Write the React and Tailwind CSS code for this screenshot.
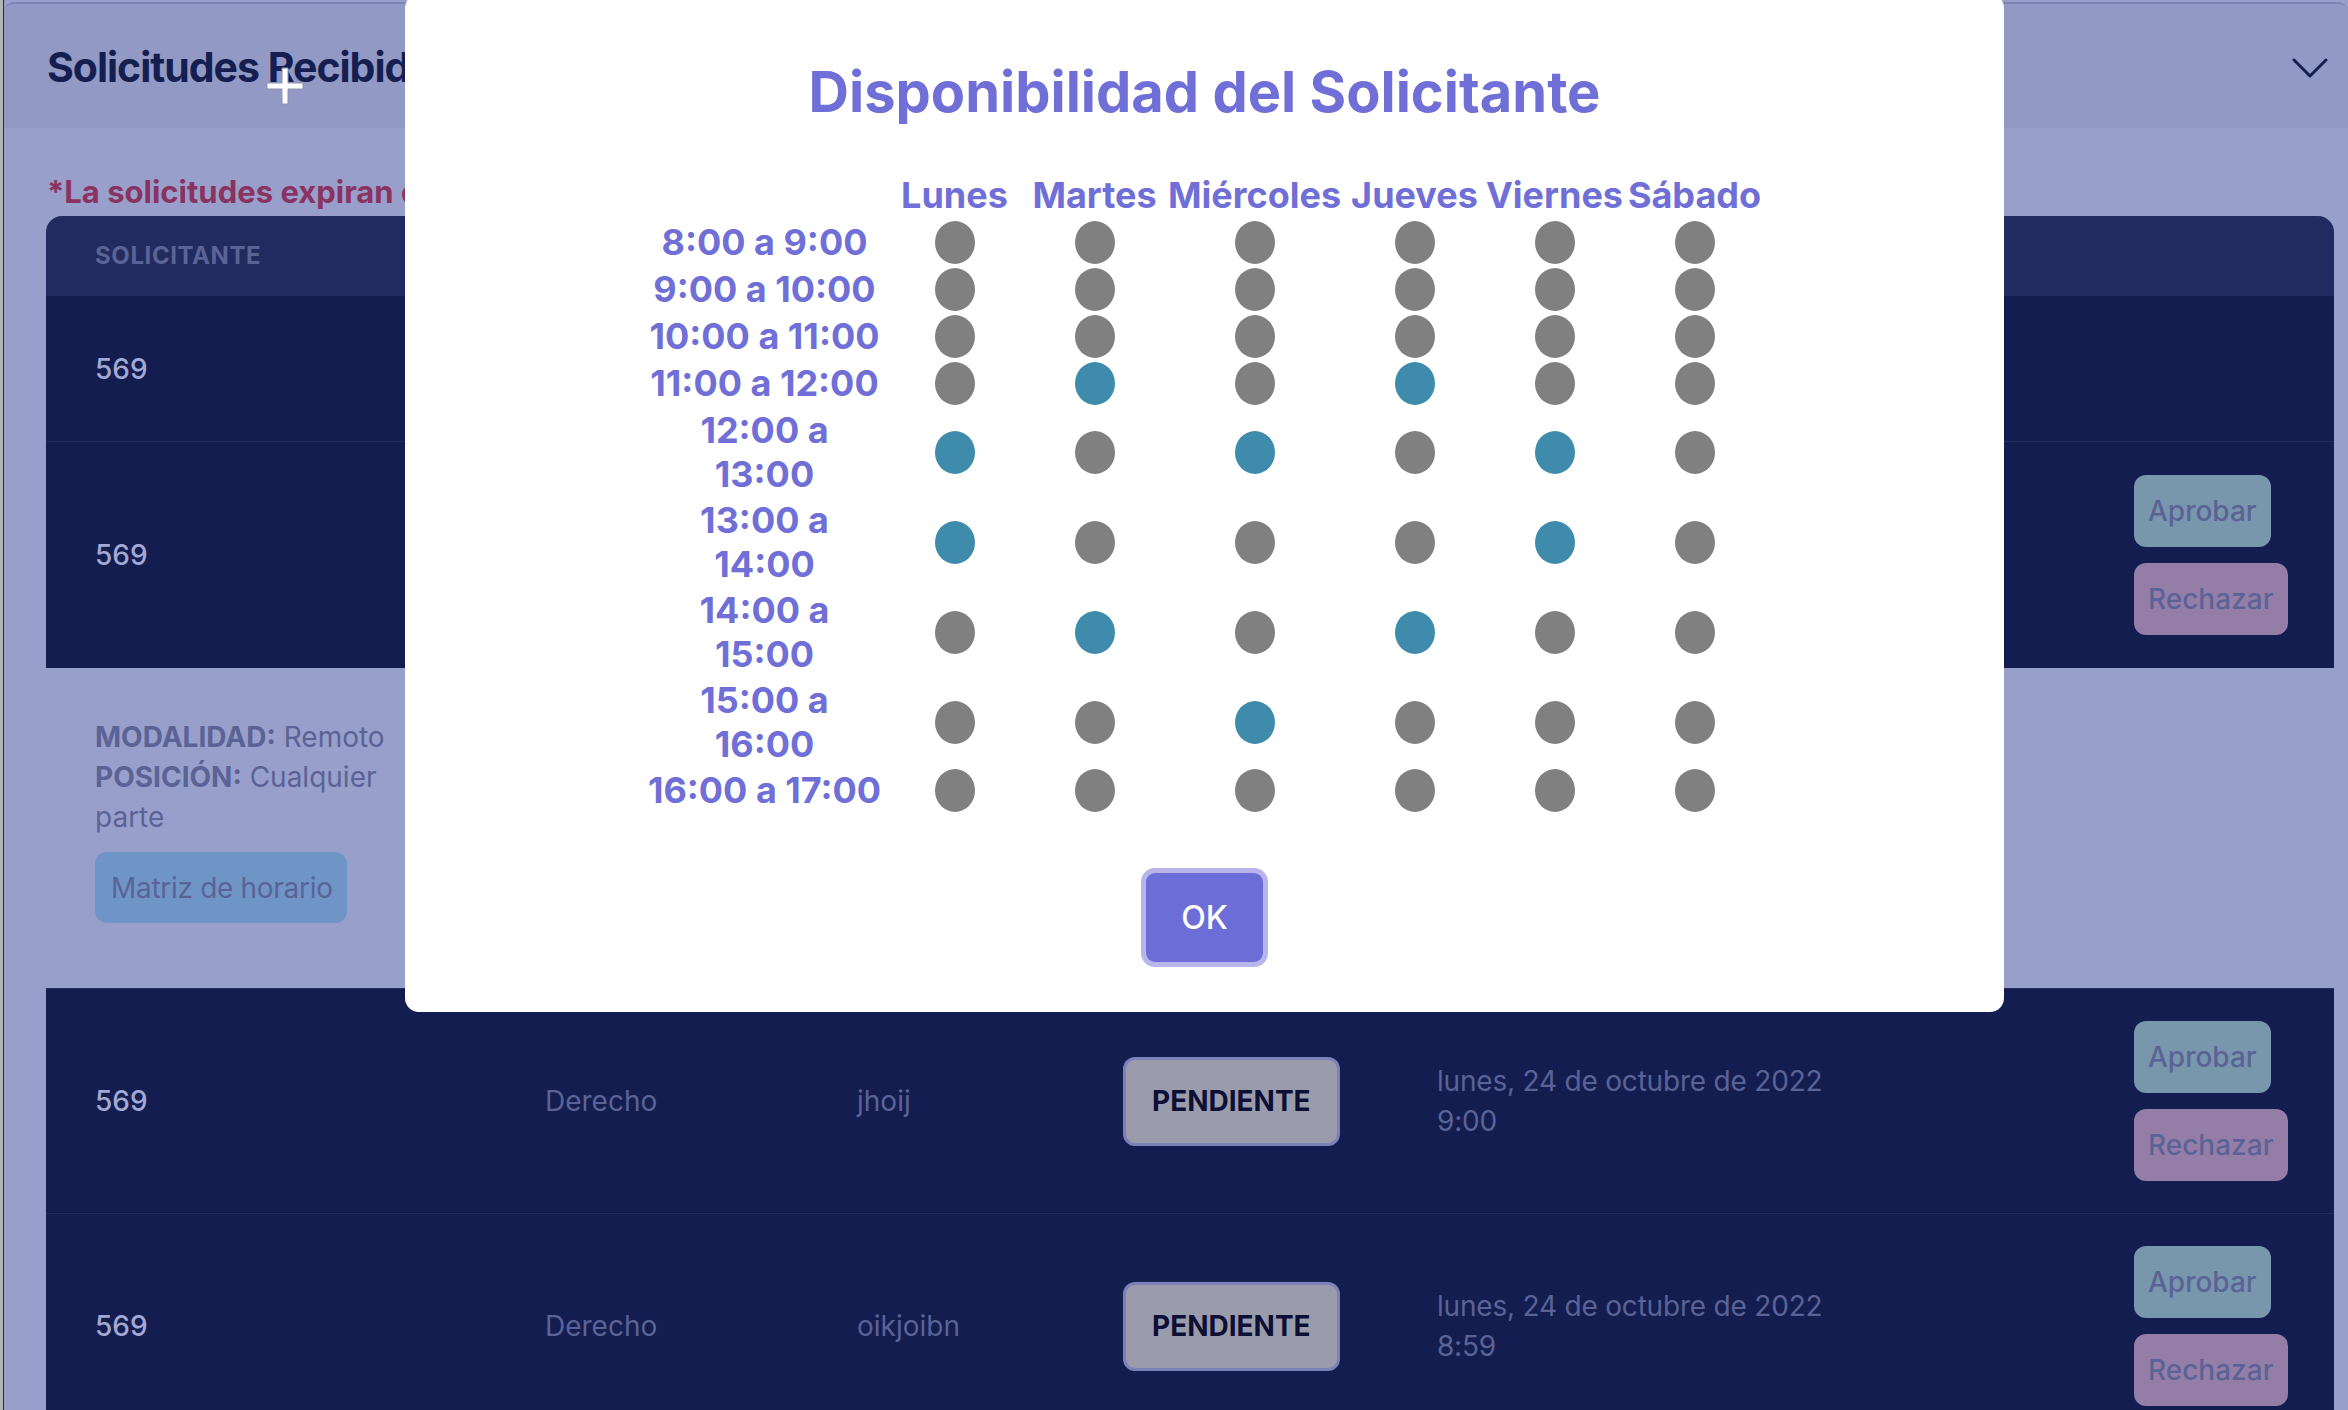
import React from 'react';

const dias = ['Lunes', 'Martes', 'Miércoles', 'Jueves', 'Viernes', 'Sábado'];

// 1 = disponible (azul), 0 = no disponible (gris)
const horarios = [
    { label: ['8:00 a 9:00'], libres: [0, 0, 0, 0, 0, 0] },
    { label: ['9:00 a 10:00'], libres: [0, 0, 0, 0, 0, 0] },
    { label: ['10:00 a 11:00'], libres: [0, 0, 0, 0, 0, 0] },
    { label: ['11:00 a 12:00'], libres: [0, 1, 0, 1, 0, 0] },
    { label: ['12:00 a', '13:00'], libres: [1, 0, 1, 0, 1, 0] },
    { label: ['13:00 a', '14:00'], libres: [1, 0, 0, 0, 1, 0] },
    { label: ['14:00 a', '15:00'], libres: [0, 1, 0, 1, 0, 0] },
    { label: ['15:00 a', '16:00'], libres: [0, 0, 1, 0, 0, 0] },
    { label: ['16:00 a 17:00'], libres: [0, 0, 0, 0, 0, 0] },
];

const solicitudes = [
    { id: 1, solicitante: '569', carrera: 'Derecho', desc: 'asdfgh', fecha: 'lunes, 24 de octubre de 2022', hora: '9:10', acciones: false, h: 'h-[145px]' },
    { id: 2, solicitante: '569', carrera: 'Derecho', desc: 'qwerty', fecha: 'lunes, 24 de octubre de 2022', hora: '9:05', acciones: true, h: 'h-[227px]', abierta: true },
    { id: 3, solicitante: '569', carrera: 'Derecho', desc: 'jhoij', fecha: 'lunes, 24 de octubre de 2022', hora: '9:00', acciones: true, h: 'h-[225px]' },
    { id: 4, solicitante: '569', carrera: 'Derecho', desc: 'oikjoibn', fecha: 'lunes, 24 de octubre de 2022', hora: '8:59', acciones: true, h: 'h-[225px]' },
];

const cols = 'grid grid-cols-[450px_312px_266px_314px_697px_1fr] pl-[49px]';

const Fila = ({ s, first }) => (
    <>
        <div className={`${cols} ${s.h} items-center bg-[#141d50] ${first ? '' : 'border-t border-[#222a5e]'}`}>
            <span className="text-[28px] leading-[40px] font-medium text-[#a3a9d3]">{s.solicitante}</span>
            <span className="text-[28px] leading-[40px] text-[#5b6396]">{s.carrera}</span>
            <span className="text-[28px] leading-[40px] text-[#5b6396]">{s.desc}</span>
            <div>
                <span className="inline-flex h-[89px] items-center rounded-[12px] border-[3px] border-[#7c81b9] bg-[#9a9cab] px-[26px] text-[28px] font-bold text-[#0c1036]">
                    PENDIENTE
                </span>
            </div>
            <div className="text-[28px] leading-[40px] tracking-[-0.2px] text-[#5b6396]">
                <div>{s.fecha}</div>
                <div>{s.hora}</div>
            </div>
            <div className="flex flex-col items-start gap-[16px]">
                {s.acciones && (
                    <>
                        <button className="flex h-[72px] items-center rounded-[12px] bg-[#7896ac] px-[14px] text-[28px] font-medium text-[#5b6396]">
                            Aprobar
                        </button>
                        <button className="flex h-[72px] items-center rounded-[12px] bg-[#947ea8] px-[14px] text-[28px] font-medium text-[#5b6396]">
                            Rechazar
                        </button>
                    </>
                )}
            </div>
        </div>
        {s.abierta && (
            <div className="h-[320px] bg-[#989fca] pl-[49px] pt-[49px]">
                <p className="max-w-[300px] text-[28px] leading-[40px] text-[#5b6396]">
                    <span className="font-bold">MODALIDAD:</span> Remoto
                    <br />
                    <span className="font-bold">POSICIÓN:</span> Cualquier parte
                </p>
                <button className="mt-[15px] flex h-[71px] w-[252px] items-center rounded-[12px] bg-[#6f95c7] pl-[16px] text-[28px] tracking-[-0.3px] text-[#5b6396]">
                    Matriz de horario
                </button>
            </div>
        )}
    </>
);

const Disponibilidad = () => (
    <div className="absolute left-[405px] top-[-6px] w-[1599px] rounded-[14px] bg-white pb-[50px] pt-[65px]">
        <h2 className="text-center text-[56px] leading-[67px] font-bold text-[#6f6fd7]">Disponibilidad del Solicitante</h2>

        <div className="mx-auto mt-[46px] grid w-[1120px] grid-cols-[240px_140px_140px_180px_140px_140px_140px] text-[36px] leading-[45px] font-bold text-[#6f6fd7]">
            <div />
            {dias.map((d) => (
                <div key={d} className="whitespace-nowrap py-[1px] text-center">{d}</div>
            ))}

            {horarios.map((h) => (
                <React.Fragment key={h.label.join(' ')}>
                    <div className={`whitespace-nowrap py-[1px] text-center ${h.label.length > 1 ? 'leading-[44px]' : ''}`}>
                        {h.label.map((l) => (
                            <div key={l}>{l}</div>
                        ))}
                    </div>
                    {h.libres.map((libre, i) => (
                        <div key={i} className="flex items-center justify-center py-[1px]">
                            <span className={`block h-[43px] w-[40px] rounded-[50%] ${libre ? 'bg-[#3f8bab]' : 'bg-[#808080]'}`} />
                        </div>
                    ))}
                </React.Fragment>
            ))}
        </div>

        <button className="mx-auto mt-[59px] flex h-[89px] w-[117px] items-center justify-center rounded-[9px] bg-[#6d6dd8] text-[32px] font-medium text-white ring-[5px] ring-[#b8b5eb]">
            OK
        </button>
    </div>
);

export default function App() {
    return (
        <div className="relative h-[1410px] w-full overflow-hidden bg-[#989fca] font-['Inter',sans-serif]">
            <div className="flex h-full">
                {/* borde de la ventana */}
                <div className="w-[4px] shrink-0 border-r border-[#2a2a2a] bg-[#b5b5b5]" />

                <div className="flex-1">
                    <header className="mt-[2px] flex h-[126px] items-center justify-between rounded-t-[10px] border-t-2 border-[#7d84b3] bg-[#9199c4] pl-[43px] pr-[20px] pt-[3px]">
                        <h1 className="text-[41px] font-bold tracking-tight text-[#151e50]">Solicitudes Recibidas</h1>
                        <svg width="36" height="22" viewBox="0 0 36 22" fill="none" stroke="#151e50" strokeWidth="3" strokeLinecap="round" strokeLinejoin="round">
                            <polyline points="2,3 18,19 34,3" />
                        </svg>
                    </header>

                    <main className="pl-[42px] pr-[14px]">
                        <p className="mt-[44px] pl-[1px] text-[31px] leading-[40px] font-bold text-[#8a3261]">
                            *La solicitudes expiran después de 7 días sin respuesta
                        </p>

                        <div className="mt-[4px] overflow-hidden rounded-t-[16px]">
                            <div className={`${cols} h-[80px] items-center bg-[#222b5f] text-[24px] font-bold uppercase tracking-wide text-[#5b6396]`}>
                                <span>Solicitante</span>
                                <span />
                                <span />
                                <span />
                                <span />
                                <span />
                            </div>
                            {solicitudes.map((s, i) => (
                                <Fila key={s.id} s={s} first={i === 0} />
                            ))}
                        </div>
                    </main>
                </div>
            </div>

            {/* cursor */}
            <svg className="absolute left-[265px] top-[66px]" width="40" height="40" viewBox="0 0 40 40">
                <path d="M17 2h6v15h15v6H23v15h-6V23H2v-6h15z" fill="#fff" stroke="#8d92b4" strokeWidth="1" />
            </svg>

            <Disponibilidad />
        </div>
    );
}
